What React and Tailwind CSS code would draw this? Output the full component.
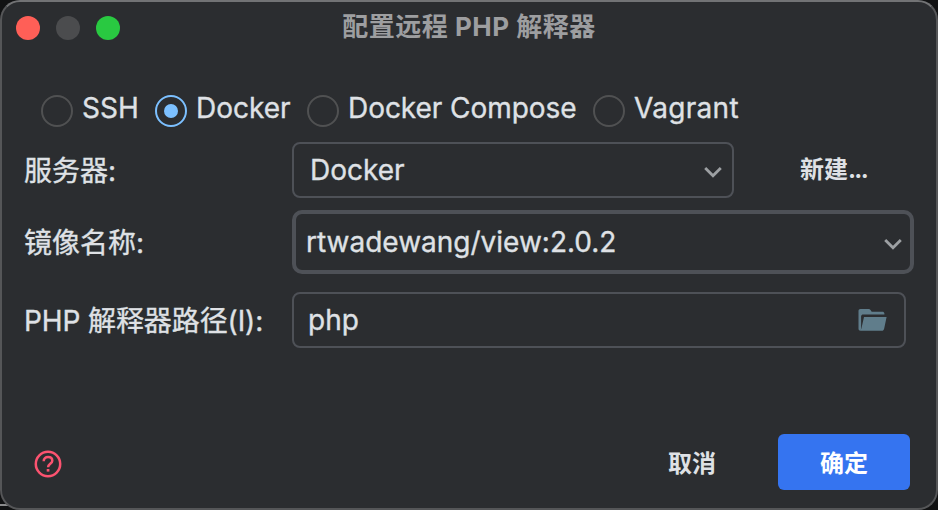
import React from "react";

const radios = [
  { label: "SSH", width: "w-[114px]" },
  { label: "Docker", width: "w-[152px]", checked: true },
  { label: "Docker Compose", width: "w-[286px]", spacing: "tracking-[-0.05px]" },
  { label: "Vagrant", width: "w-[160px]", spacing: "tracking-[0.3px]" },
];

function Radio({ label, width, checked, spacing = "" }) {
  return (
    <label className={`flex shrink-0 items-center ${width}`}>
      <span
        className={`flex size-8 shrink-0 items-center justify-center rounded-full border-2 ${
          checked ? "border-[#7cc0ff]" : "border-[#505152]"
        }`}
      >
        {checked && <span className="size-3.5 rounded-full bg-[#7cc0ff]" />}
      </span>
      <span className={`-mt-1.5 ml-[9px] whitespace-nowrap leading-8 ${spacing}`}>{label}</span>
    </label>
  );
}

function Chevron() {
  return (
    <svg width="18" height="11" viewBox="0 0 18 11" className="shrink-0" fill="none">
      <path d="M1.2 1 9 8.800l7.800-7.800" stroke="#9da0a3" strokeWidth="2.800" />
    </svg>
  );
}

function FolderIcon() {
  return (
    <svg width="30" height="22" viewBox="0 0 30 22" className="shrink-0">
      <path
        d="M2.5 0h8.2c.8 0 1.3.3 1.8 1l1.2 1.8h10.8c1 0 1.700.6 1.900 1.700V5.500H5.200C4 5.500 3.300 6 3.100 7.200V13v7l-.6 1.800C1 21.600.5 20.800.5 19.500V2C.5.700 1.200 0 2.500 0Z"
        fill="#607d8b"
      />
      <path d="M6 8h22.600L26.200 19.500c-.4 1.700-1.100 2.300-2.500 2.300H2.200L3.400 19.500Z" fill="#607d8b" />
    </svg>
  );
}

function HelpIcon() {
  return (
    <svg width="28" height="28" viewBox="0 0 28 28" fill="none">
      <circle cx="14" cy="14" r="12.200" stroke="#fc5370" strokeWidth="2.500" />
      <path
        d="M9.700 11.200C9.700 8.500 11.500 7 14.100 7c2.500 0 4.200 1.500 4.200 3.700 0 3-4.200 3.300-4.200 6.500"
        stroke="#fc5370"
        strokeWidth="2.500"
      />
      <path d="M12.700 19h2.700v2.600h-2.700z" fill="#fc5370" />
    </svg>
  );
}

export default function App() {
  return (
    <div className="relative h-[510px] w-[938px] overflow-hidden bg-[#111213] font-['Inter','Noto_Sans_CJK_SC',sans-serif] text-[28px] text-[#dfe1e5] [-webkit-text-stroke:0.35px]">
      <span className="absolute left-0 top-[504px] h-0.5 w-2.5 bg-[#8a8b8c]" />
      <div className="relative flex h-full flex-col rounded-[20px] border-2 border-[#555658] border-t-[#727375] bg-[#2b2d30]">
        <header className="flex h-[52px] shrink-0 items-center pl-3.5 pr-3.5">
          <div className="flex w-[104px] gap-4">
            <span className="size-6 rounded-full bg-[#ff5f57]" />
            <span className="size-6 rounded-full bg-[#4b4c4e]" />
            <span className="size-6 rounded-full bg-[#29c941]" />
          </div>
          <h1 className="-mt-0.5 mr-[104px] flex-1 text-center text-[26px] font-bold leading-8 tracking-[0.5px] text-[#9d9ea0] [-webkit-text-stroke:0px]">
            配置远程 PHP 解释器
          </h1>
        </header>

        <div className="mt-[41px] flex h-8 shrink-0 pl-[39px]">
          {radios.map((r) => (
            <Radio key={r.label} {...r} />
          ))}
        </div>

        <div className="mt-[15px] flex h-14 shrink-0 items-center pl-[22px]">
          <span className="w-[268px] pt-0.5 leading-8">服务器:</span>
          <div className="flex h-14 w-[442px] items-center justify-between rounded-lg border-2 border-[#4e5157] pl-4 pr-[10px]">
            <span className="leading-8">Docker</span>
            <span className="pt-1"><Chevron /></span>
          </div>
          <button className="ml-[66px] text-[24px] font-bold leading-8 [-webkit-text-stroke:0px]">
            新建<span className="tracking-[-1.7px]">...</span>
          </button>
        </div>

        <div className="mt-3 flex h-16 shrink-0 items-center pl-[22px]">
          <span className="w-[268px] pt-0.5 leading-8">镜像名称:</span>
          <div className="flex h-16 w-[622px] items-center justify-between rounded-[10px] border-4 border-[#4e5157] pl-2.5 pr-2">
            <span className="leading-8">rtwadewang/view:2.0.2</span>
            <span className="pt-1"><Chevron /></span>
          </div>
        </div>

        <div className="mt-[18px] flex h-14 shrink-0 items-center pl-[22px]">
          <span className="w-[268px] whitespace-nowrap pt-0.5 leading-8 tracking-[-0.1px]">PHP 解释器路径(I):</span>
          <div className="flex h-14 w-[614px] items-center justify-between rounded-lg border-2 border-[#4e5157] pl-3.5 pr-4">
            <span className="leading-8">php</span>
            <FolderIcon />
          </div>
        </div>

        <footer className="mt-[86px] flex h-14 shrink-0 items-center pl-8 pr-[26px] [-webkit-text-stroke:0px]">
          <span className="mt-1"><HelpIcon /></span>
          <button className="ml-auto mr-[62px] pt-1 text-[24px] font-bold leading-8">取消</button>
          <button className="h-14 w-[132px] rounded-md bg-[#3574f0] pt-1 text-[24px] font-bold leading-8 text-white">
            确定
          </button>
        </footer>
      </div>
    </div>
  );
}
